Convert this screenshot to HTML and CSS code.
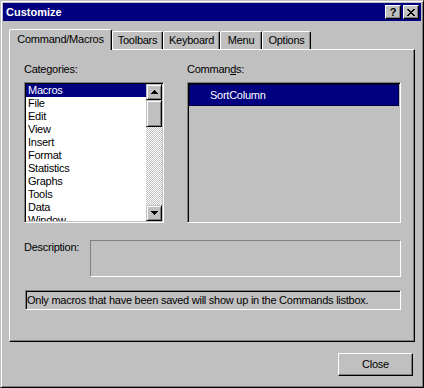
FILE: index.html
```html
<!DOCTYPE html>
<html lang="en">
<head>
    <meta charset="UTF-8">
    <title>Customize</title>
    <link rel="stylesheet" href="styles.css">
</head>
<body>
<div class="window">
    <div class="titlebar">
        <span class="title">Customize</span>
        <div class="title-buttons">
            <div class="tbtn help">?</div>
            <div class="tbtn">
                <svg width="8" height="7" viewBox="0 0 8 7"><path d="M0 0h2v1H0zM6 0h2v1H6zM1 1h2v1H1zM5 1h2v1H5zM2 2h4v1H2zM3 3h2v1H3zM2 4h4v1H2zM1 5h2v1H1zM5 5h2v1H5zM0 6h2v1H0zM6 6h2v1H6z"/></svg>
            </div>
        </div>
    </div>
    <div class="dialog">
        <div class="tabs">
            <div class="tab active tab-cmd">Command/Macros</div>
            <div class="tab tab-toolbars">Toolbars</div>
            <div class="tab tab-keyboard">Keyboard</div>
            <div class="tab tab-menu">Menu</div>
            <div class="tab tab-options">Options</div>
        </div>
        <div class="panel">
            <div class="lists">
                <div class="group categories">
                    <div class="label">Categories:</div>
                    <div class="listbox white">
                        <ul class="items">
                            <li class="selected">Macros</li>
                            <li>File</li>
                            <li>Edit</li>
                            <li>View</li>
                            <li>Insert</li>
                            <li>Format</li>
                            <li>Statistics</li>
                            <li>Graphs</li>
                            <li>Tools</li>
                            <li>Data</li>
                            <li>Window</li>
                        </ul>
                        <div class="scrollbar">
                            <div class="raised arrow">
                                <svg width="7" height="4" viewBox="0 0 7 4"><path d="M3 0h1v1H3zM2 1h3v1H2zM1 2h5v1H1zM0 3h7v1H0z"/></svg>
                            </div>
                            <div class="raised thumb"></div>
                            <div class="track"></div>
                            <div class="raised arrow">
                                <svg width="7" height="4" viewBox="0 0 7 4"><path d="M0 0h7v1H0zM1 1h5v1H1zM2 2h3v1H2zM3 3h1v1H3z"/></svg>
                            </div>
                        </div>
                    </div>
                </div>
                <div class="group commands">
                    <div class="label">Comman<u>d</u>s:</div>
                    <div class="listbox">
                        <div class="command selected">SortColumn</div>
                    </div>
                </div>
            </div>
            <div class="desc-row">
                <div class="label desc-label">Description:</div>
                <div class="desc-box"></div>
            </div>
            <div class="status">Only macros that have been saved will show up in the Commands listbox.</div>
        </div>
        <div class="footer">
            <div class="btn">Close</div>
        </div>
    </div>
</div>
</body>
</html>
```

FILE: styles.css
```css
body {
    margin: 0;
    background-color: #c0c0c0;
    font-family: "Liberation Sans", Arial, sans-serif;
    font-size: 11px;
    letter-spacing: -0.25px;
    color: #000;
}
.window {
    width: 424px;
    height: 388px;
    box-sizing: border-box;
    border: 1px solid;
    border-color: #c0c0c0 #000 #000 #c0c0c0;
    box-shadow: inset 1px 1px #fff, inset -1px -1px #808080;
    padding: 2px;
    background-color: #c0c0c0;
}
.titlebar {
    height: 18px;
    background-color: #000080;
    display: flex;
    align-items: center;
    justify-content: space-between;
    padding: 0 2px 0 3px;
}
.title {
    color: #fff;
    font-weight: bold;
    letter-spacing: 0;
}
.title-buttons {
    display: flex;
    gap: 2px;
}
.tbtn {
    width: 16px;
    height: 14px;
    box-sizing: border-box;
    border: 1px solid;
    border-color: #fff #000 #000 #fff;
    box-shadow: inset -1px -1px #808080;
    background-color: #c0c0c0;
    display: flex;
    align-items: center;
    justify-content: center;
}
.tbtn.help {
    font-weight: bold;
    letter-spacing: 0;
    line-height: 12px;
}
.dialog {
    padding: 8px 6px 0 6px;
}
.tabs {
    display: flex;
    align-items: flex-end;
    height: 20px;
}
.tab {
    height: 18px;
    box-sizing: border-box;
    border: 1px solid;
    border-bottom: 0;
    border-color: #fff #000 #000 #fff;
    box-shadow: inset -1px 0 #808080;
    border-radius: 2px 2px 0 0;
    padding-top: 2px;
    line-height: 13px;
    text-align: center;
    white-space: nowrap;
}
.tab.active {
    height: 21px;
    margin-bottom: -1px;
    padding-top: 3px;
    position: relative;
    z-index: 1;
    background-color: #c0c0c0;
}
.tab-cmd { width: 103px; }
.tab-toolbars { width: 51px; }
.tab-keyboard { width: 57px; }
.tab-menu { width: 42px; }
.tab-options { width: 49px; }
.panel {
    height: 293px;
    box-sizing: border-box;
    border: 1px solid;
    border-color: #fff #000 #000 #fff;
    box-shadow: inset -1px -1px #808080;
    padding: 13px 13px 0 14px;
}
.lists {
    display: flex;
    justify-content: space-between;
}
.label {
    height: 13px;
    line-height: 13px;
    margin-bottom: 6px;
    white-space: nowrap;
}
.categories { width: 140px; }
.commands { width: 214px; }
.listbox {
    height: 141px;
    box-sizing: border-box;
    border: 1px solid;
    border-color: #808080 #fff #fff #808080;
    box-shadow: inset 1px 1px #000, inset -1px -1px #c0c0c0;
    padding: 1px;
    display: flex;
    flex-direction: column;
}
.listbox.white {
    flex-direction: row;
}
.items {
    flex: 1;
    margin: 0;
    padding: 0;
    list-style: none;
    overflow: hidden;
    background-color: #fff;
}
.items li {
    height: 13px;
    line-height: 13px;
    padding-left: 2px;
    white-space: nowrap;
}
.selected {
    background-color: #000080;
    color: #fff;
}
.scrollbar {
    width: 16px;
    display: flex;
    flex-direction: column;
}
.raised {
    box-sizing: border-box;
    border: 1px solid;
    border-color: #c0c0c0 #000 #000 #c0c0c0;
    box-shadow: inset 1px 1px #fff, inset -1px -1px #808080;
    background-color: #c0c0c0;
}
.arrow {
    height: 16px;
    display: flex;
    align-items: center;
    justify-content: center;
}
.thumb {
    height: 27px;
}
.track {
    flex: 1;
    background-color: #c0c0c0;
    background-image: conic-gradient(#fff 25%, #c0c0c0 0 50%, #fff 0 75%, #c0c0c0 0);
    background-size: 2px 2px;
}
.command {
    height: 22px;
    box-sizing: border-box;
    border: 1px dotted #000;
    line-height: 20px;
    padding-left: 20px;
}
.desc-row {
    display: flex;
    margin-top: 17px;
}
.desc-label {
    width: 66px;
    padding-top: 1px;
}
.desc-box {
    width: 311px;
    height: 37px;
    box-sizing: border-box;
    border: 1px solid;
    border-color: #808080 #fff #fff #808080;
}
.status {
    margin: 13px 0 0 1px;
    width: 376px;
    height: 20px;
    box-sizing: border-box;
    border: 1px solid;
    border-color: #808080 #fff #fff #808080;
    box-shadow: inset 1px 1px #000, inset -1px -1px #c0c0c0;
    line-height: 18px;
    padding-left: 1px;
    white-space: nowrap;
}
.footer {
    display: flex;
    justify-content: flex-end;
    padding: 11px 2px 0 0;
}
.btn {
    width: 75px;
    height: 23px;
    box-sizing: border-box;
    border: 1px solid;
    border-color: #fff #000 #000 #fff;
    box-shadow: inset -1px -1px #808080;
    text-align: center;
    line-height: 21px;
}
```
